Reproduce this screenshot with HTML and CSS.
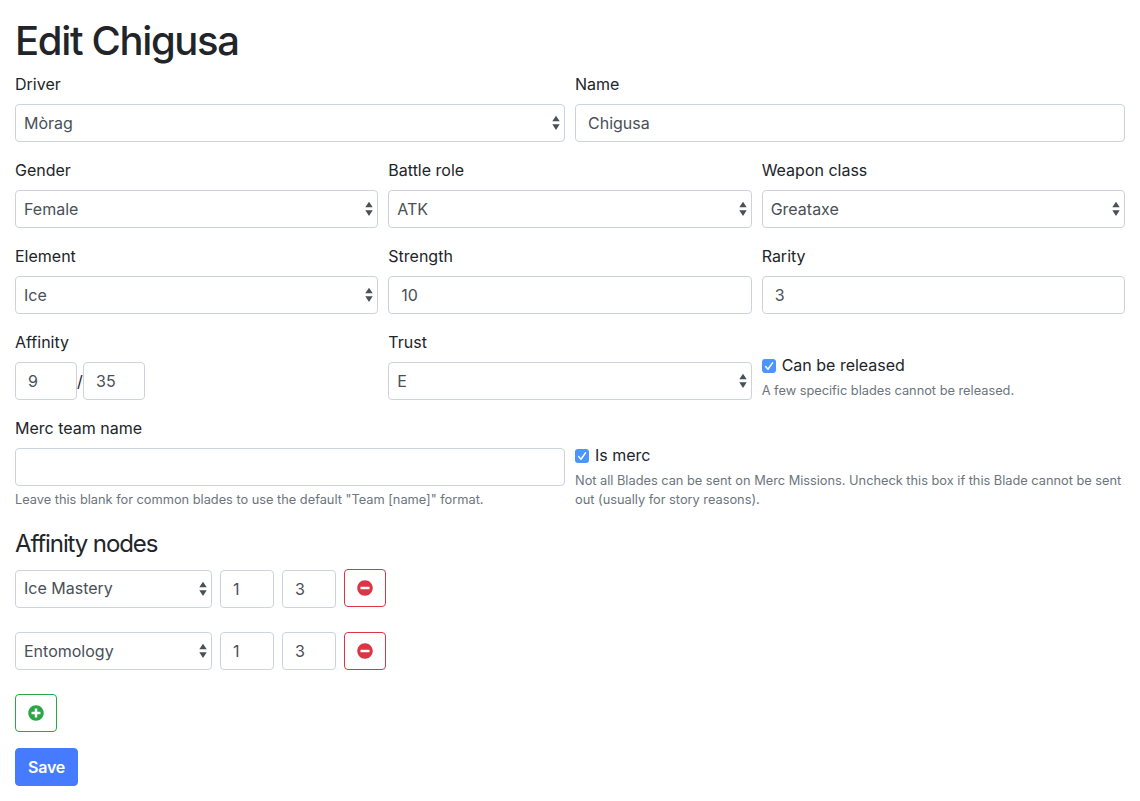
FILE: index.html
```html
<!DOCTYPE html>
<html lang="en">
<head>
<meta charset="utf-8">
<title>Edit Chigusa</title>
<link rel="stylesheet" href="styles.css">
</head>
<body>
<svg class="sprite" width="0" height="0" aria-hidden="true">
  <symbol id="arrows" viewBox="0 0 8 16"><path d="M4 .8 7.700 6.300H.3zM4 15 .3 9.300h7.400z"/></symbol>
  <symbol id="check" viewBox="0 0 14 14"><path d="M3.6 7.5 6 10.2 10.5 3.9"/></symbol>
  <symbol id="minus" viewBox="0 0 512 512"><path d="M256 8C119 8 8 119 8 256s111 248 248 248 248-111 248-248S393 8 256 8zM124 296c-6.600 0-12-5.400-12-12v-56c0-6.600 5.400-12 12-12h264c6.600 0 12 5.400 12 12v56c0 6.600-5.400 12-12 12H124z"/></symbol>
  <symbol id="plus" viewBox="0 0 512 512"><path d="M256 8C119 8 8 119 8 256s111 248 248 248 248-111 248-248S393 8 256 8zm144 276c0 6.600-5.400 12-12 12h-92v92c0 6.600-5.400 12-12 12h-56c-6.600 0-12-5.400-12-12v-92h-92c-6.600 0-12-5.400-12-12v-56c0-6.600 5.400-12 12-12h92v-92c0-6.600 5.400-12 12-12h56c6.600 0 12 5.400 12 12v92h92c6.600 0 12 5.400 12 12v56z"/></symbol>
</svg>
<main class="container">
  <h1 class="title">Edit Chigusa</h1>
  <form>
    <div class="form-row two">
      <div class="group"><label class="label">Driver</label><div class="select"><select class="control"><option>Mòrag</option></select><svg class="arrows"><use href="#arrows"/></svg></div></div>
      <div class="group"><label class="label">Name</label><input class="control" value="Chigusa"></div>
    </div>
    <div class="form-row three">
      <div class="group"><label class="label">Gender</label><div class="select"><select class="control"><option>Female</option></select><svg class="arrows"><use href="#arrows"/></svg></div></div>
      <div class="group"><label class="label">Battle role</label><div class="select"><select class="control"><option>ATK</option></select><svg class="arrows"><use href="#arrows"/></svg></div></div>
      <div class="group"><label class="label">Weapon class</label><div class="select"><select class="control"><option>Greataxe</option></select><svg class="arrows"><use href="#arrows"/></svg></div></div>
    </div>
    <div class="form-row three">
      <div class="group"><label class="label">Element</label><div class="select"><select class="control"><option>Ice</option></select><svg class="arrows"><use href="#arrows"/></svg></div></div>
      <div class="group"><label class="label">Strength</label><input class="control" value="10"></div>
      <div class="group"><label class="label">Rarity</label><input class="control" value="3"></div>
    </div>
    <div class="form-row three">
      <div class="group"><label class="label">Affinity</label><div class="pair"><input class="control" value="9"><span class="slash">/</span><input class="control" value="35"></div></div>
      <div class="group"><label class="label">Trust</label><div class="select"><select class="control"><option>E</option></select><svg class="arrows"><use href="#arrows"/></svg></div></div>
      <div class="group"><label class="check"><svg class="box"><use href="#check"/></svg><span>Can be released</span></label><small class="help">A few specific blades cannot be released.</small></div>
    </div>
    <div class="form-row two">
      <div class="group"><label class="label">Merc team name</label><input class="control"><small class="help">Leave this blank for common blades to use the default "Team [name]" format.</small></div>
      <div class="group"><label class="check"><svg class="box"><use href="#check"/></svg><span>Is merc</span></label><small class="help">Not all Blades can be sent on Merc Missions. Uncheck this box if this Blade cannot be sent out (usually for story reasons).</small></div>
    </div>
    <h2 class="legend">Affinity nodes</h2>
    <div class="node first">
      <div class="select"><select class="control"><option>Ice Mastery</option></select><svg class="arrows"><use href="#arrows"/></svg></div>
      <input class="control" value="1"><input class="control" value="3">
      <button class="btn danger" type="button"><svg class="icon"><use href="#minus"/></svg></button>
    </div>
    <div class="node">
      <div class="select"><select class="control"><option>Entomology</option></select><svg class="arrows"><use href="#arrows"/></svg></div>
      <input class="control" value="1"><input class="control" value="3">
      <button class="btn danger" type="button"><svg class="icon"><use href="#minus"/></svg></button>
    </div>
    <button class="btn success" type="button"><svg class="icon"><use href="#plus"/></svg></button>
    <button class="btn primary" type="button">Save</button>
  </form>
</main>
</body>
</html>
```
FILE: styles.css
```css
* { box-sizing: border-box; }
body { margin: 0; background: #fff; color: #212529; font: 400 16px/24px Inter, "Liberation Sans", sans-serif; }
.sprite { display: block; }
.container { padding: 16px 15px 15px; }
.title { margin: 0 0 8px; font-size: 40px; line-height: 49px; height: 48px; font-weight: 500; letter-spacing: -1.35px; }
.form-row { display: grid; column-gap: 10px; align-items: end; margin-bottom: 16px; }
.two { grid-template-columns: 1fr 1fr; }
.three { grid-template-columns: repeat(3, 1fr); }
.group { min-width: 0; }
.label { display: block; margin-bottom: 8px; }
.control { display: block; width: 100%; height: 38px; margin: 0; padding: 6px 12px; border: 1px solid #cdd3dd; border-radius: 4px; background: #fff; color: #495057; font: inherit; letter-spacing: inherit; appearance: none; outline: 0; }
.select { position: relative; }
.select .control { padding: 0 8px; }
.first .select .control { padding-bottom: 2px; }
.arrows { position: absolute; right: 5px; top: 11px; width: 8px; height: 16px; fill: #495057; }
.pair { display: flex; align-items: center; }
.pair .control { width: 62px; }
.slash { width: 6px; }
.check { display: flex; align-items: center; gap: 6px; }
.box { width: 14px; height: 14px; margin-top: 3px; border-radius: 3px; background: #4b96fc; fill: none; stroke: #fff; stroke-width: 1.5; stroke-linecap: round; stroke-linejoin: round; }
.help { display: block; margin-top: 4px; color: #6c757d; font-size: 12.8px; line-height: 19.2px; letter-spacing: -0.01px; }
.legend { margin: 0 0 8px; padding-top: 1px; font-size: 24px; line-height: 36px; font-weight: 400; letter-spacing: -1.1px; }
.node { display: grid; grid-template-columns: 197px 54px 54px 42px; column-gap: 8px; margin-bottom: 24px; }
.btn { display: flex; align-items: center; justify-content: center; width: 42px; height: 38px; padding: 0; border: 1px solid; border-radius: 4px; background: #fff; font: 500 16px/24px Inter, "Liberation Sans", sans-serif; }
.danger { color: #dc3545; }
.first .danger { margin-top: -1px; }
.success { color: #28a745; margin-bottom: 16px; }
.primary { width: 63px; background: #467bff; border-color: #467bff; color: #fff; font-weight: 600; letter-spacing: -0.2px; }
.icon { width: 16px; height: 16px; fill: currentColor; }
```
